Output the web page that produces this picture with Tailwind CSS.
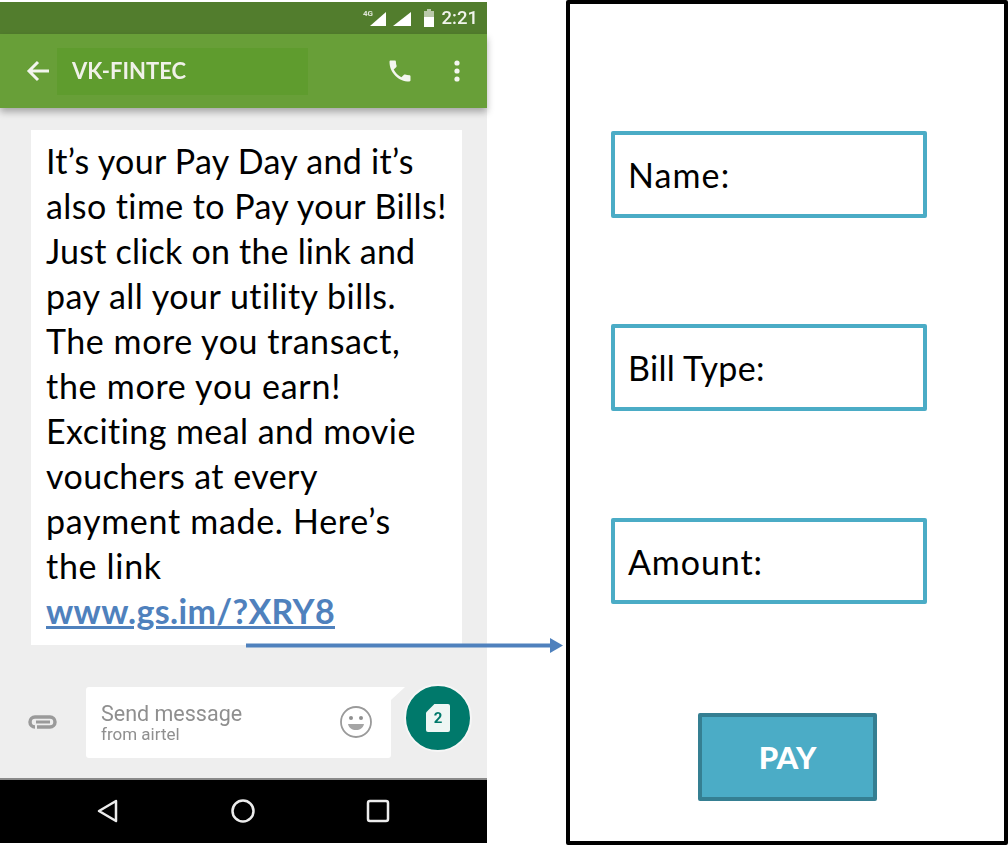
<!DOCTYPE html>
<html><head><meta charset="utf-8"><script src="https://cdn.jsdelivr.net/npm/@tailwindcss/browser@4"></script></head>
<body class="bg-white">
<div class="relative w-[1008px] h-[845px] overflow-hidden bg-white flex font-['Lato','Liberation_Sans',sans-serif]">
  <!-- phone -->
  <div class="w-[487px] h-[841px] mt-[2px] flex flex-col bg-[#eeeeee] shrink-0">
    <div class="h-[32px] bg-[#527d2d] flex items-center justify-end pr-[9px] text-white shrink-0">
      <svg width="50" height="22" viewBox="0 0 50 22" class="blur-[0.4px]">
        <text x="0" y="9" font-size="8" font-family="Roboto" font-weight="700" fill="#dfe6d6">4G</text>
        <path d="M7 19 L23 5 V19 Z" fill="#fff"/>
        <path d="M30 19 L48 5 V19 Z" fill="#fff"/>
      </svg>
      <svg width="12" height="20" viewBox="0 0 12 20" class="ml-[10px] blur-[0.4px]"><path d="M4 1h4v2h3v16H1V3h3z" fill="#b9c9a9"/><path d="M1 9h10v10H1z" fill="#fff"/></svg>
      <span class="font-['Roboto'] text-[18.500px] font-medium text-[#f1f4ec] leading-none ml-[7px] blur-[0.3px]">2:21</span>
    </div>
    <div class="h-[74px] bg-[#689f38] flex items-center relative shrink-0 shadow-[0_4px_7px_rgba(0,0,0,0.3)] z-10">
      <svg width="26" height="24" viewBox="0 0 26 24" class="ml-[25px] blur-[0.3px]"><path d="M24 12H4M13 3l-9 9 9 9" fill="none" stroke="#f2f5ee" stroke-width="3"/></svg>
      <div class="ml-[6px] w-[251px] h-[47px] bg-[#5f9c2e] flex items-center pl-[15px] text-[22px] font-bold text-[#f0f1e8] leading-none blur-[0.2px]">VK-FINTEC</div>
      <svg width="28" height="28" viewBox="0 0 24 24" class="ml-[78px] blur-[0.3px]"><path d="M6.6 10.8c1.4 2.8 3.8 5.100 6.600 6.600l2.200-2.200c.3-.3.700-.4 1-.2 1.100.4 2.300.6 3.600.6.600 0 1 .4 1 1V20c0 .6-.4 1-1 1C10.600 21 3 13.400 3 4c0-.6.400-1 1-1h3.500c.6 0 1 .4 1 1 0 1.300.2 2.500.6 3.600.1.300 0 .7-.2 1z" fill="#f4f6ef"/></svg>
      <svg width="8" height="24" viewBox="0 0 8 24" class="ml-[39px] blur-[0.3px]"><circle cx="4" cy="4" r="2.600" fill="#f4f6ef"/><circle cx="4" cy="12" r="2.600" fill="#f4f6ef"/><circle cx="4" cy="20" r="2.600" fill="#f4f6ef"/></svg>
    </div>
    <div class="flex-1 relative">
      <div class="mt-[22px] ml-[31px] w-[431px] h-[515px] bg-white pl-[15px] pt-[8px] text-[34px] leading-[45px] text-black tracking-[0.45px] whitespace-nowrap">
        <p class="tracking-[0.29px]">It’s your Pay Day and it’s</p>
        <p class="tracking-[0.42px]">also time to Pay your Bills!</p>
        <p class="tracking-[0.21px]">Just click on the link and</p>
        <p class="tracking-[0.5px]">pay all your utility bills.</p>
        <p class="tracking-[0.55px]">The more you transact,</p>
        <p class="tracking-[0.73px]">the more you earn!</p>
        <p>Exciting meal and movie</p>
        <p>vouchers at every</p>
        <p class="tracking-[0.7px]">payment made. Here’s</p>
        <p class="tracking-[0.7px]">the link</p>
        <p class="font-bold text-[#4f81bd] underline decoration-[3px] tracking-[0.33px]">www.gs.im/?XRY8</p>
      </div>
      <div class="absolute left-[86px] top-[579px] w-[305px] h-[71px] bg-white rounded-[3px] pl-[15px] pt-[16px] font-['Roboto'] text-[#8f8f8f]">
        <p class="text-[21.500px] leading-[22px] blur-[0.6px]">Send message</p>
        <p class="text-[17px] leading-[20px] -mt-[1px] blur-[0.6px]">from airtel</p>
      </div>
      <div class="absolute left-[377px] top-[579px] w-[28px] h-[26px] bg-white [clip-path:polygon(0_0,100%_0,0_100%)]"></div>
      <svg width="34" height="34" viewBox="0 0 34 34" class="absolute left-[339px] top-[597px] blur-[0.5px]"><circle cx="17" cy="17" r="15" fill="none" stroke="#9a9a9a" stroke-width="1.800"/><circle cx="12" cy="13" r="2" fill="#8f8f8f"/><circle cx="22" cy="13" r="2" fill="#8f8f8f"/><path d="M9 19h16c-1 4-4 6-8 6s-7-2-8-6z" fill="#a5a5a5"/></svg>
      <svg width="30" height="16" viewBox="0 0 30 16" class="absolute left-[28px] top-[606px] blur-[0.5px]"><path d="M9 13h13a5 5 0 0 0 0-10H7a5 5 0 0 0 0 10" fill="none" stroke="#9a9a9a" stroke-width="3.500"/><path d="M8 8h14" stroke="#9a9a9a" stroke-width="3"/></svg>
      <div class="absolute left-[404px] top-[576px] w-[68px] h-[68px] rounded-full bg-[#00796b] border-2 border-[#f6f6f6] flex items-center justify-center">
        <div class="relative w-[24px] h-[28px] bg-[#eef6f4] rounded-[2px] [clip-path:polygon(35%_0,100%_0,100%_100%,0_100%,0_30%)] flex items-center justify-center text-[#00796b] font-['Roboto'] font-bold text-[15px] leading-none blur-[0.3px]">2</div>
      </div>
    </div>
    <div class="h-[65px] bg-black border-t-2 border-[#8a8a8a] relative shrink-0">
      <svg width="24" height="26" viewBox="0 0 24 26" class="absolute left-[96px] top-[18px] blur-[0.4px]"><path d="M20 3 L3 13 L20 23 Z" fill="none" stroke="#ececec" stroke-width="2.500" stroke-linejoin="round"/></svg>
      <svg width="26" height="26" viewBox="0 0 26 26" class="absolute left-[230px] top-[18px] blur-[0.4px]"><circle cx="13" cy="13" r="10.500" fill="none" stroke="#ececec" stroke-width="2.500"/></svg>
      <svg width="24" height="24" viewBox="0 0 24 24" class="absolute left-[366px] top-[19px] blur-[0.4px]"><rect x="2" y="2" width="20" height="20" rx="2" fill="none" stroke="#ececec" stroke-width="2.500"/></svg>
    </div>
  </div>
  <!-- arrow -->
  <svg width="320" height="16" viewBox="0 0 320 16" class="absolute left-[246px] top-[638px] z-20"><path d="M0 7.500H306" stroke="#4f81bd" stroke-width="4"/><path d="M304 0l13 7.500-13 7.500z" fill="#4f81bd"/></svg>
  <!-- form -->
  <div class="absolute left-[566px] top-0 w-[442px] h-[845px] border-4 border-black rounded-[2px]">
    <div class="absolute left-[41px] top-[127px] w-[316px] h-[87px] border-[4px] border-[#4bacc6] rounded-[2px] flex items-center pl-[13px] text-[34px] text-black tracking-[1.1px]">Name:</div>
    <div class="absolute left-[41px] top-[320px] w-[316px] h-[87px] border-[4px] border-[#4bacc6] rounded-[2px] flex items-center pl-[13px] text-[34px] text-black tracking-[0.3px]">Bill Type:</div>
    <div class="absolute left-[41px] top-[514px] w-[316px] h-[86px] border-[4px] border-[#4bacc6] rounded-[2px] flex items-center pl-[13px] text-[34px] text-black tracking-[0.9px]">Amount:</div>
    <div class="absolute left-[128px] top-[709px] w-[179px] h-[88px] bg-[#4bacc6] border-[4px] border-[#357f92] rounded-[2px] flex items-center justify-center text-[31px] font-black text-white">PAY</div>
  </div>
</div>
</body></html>
